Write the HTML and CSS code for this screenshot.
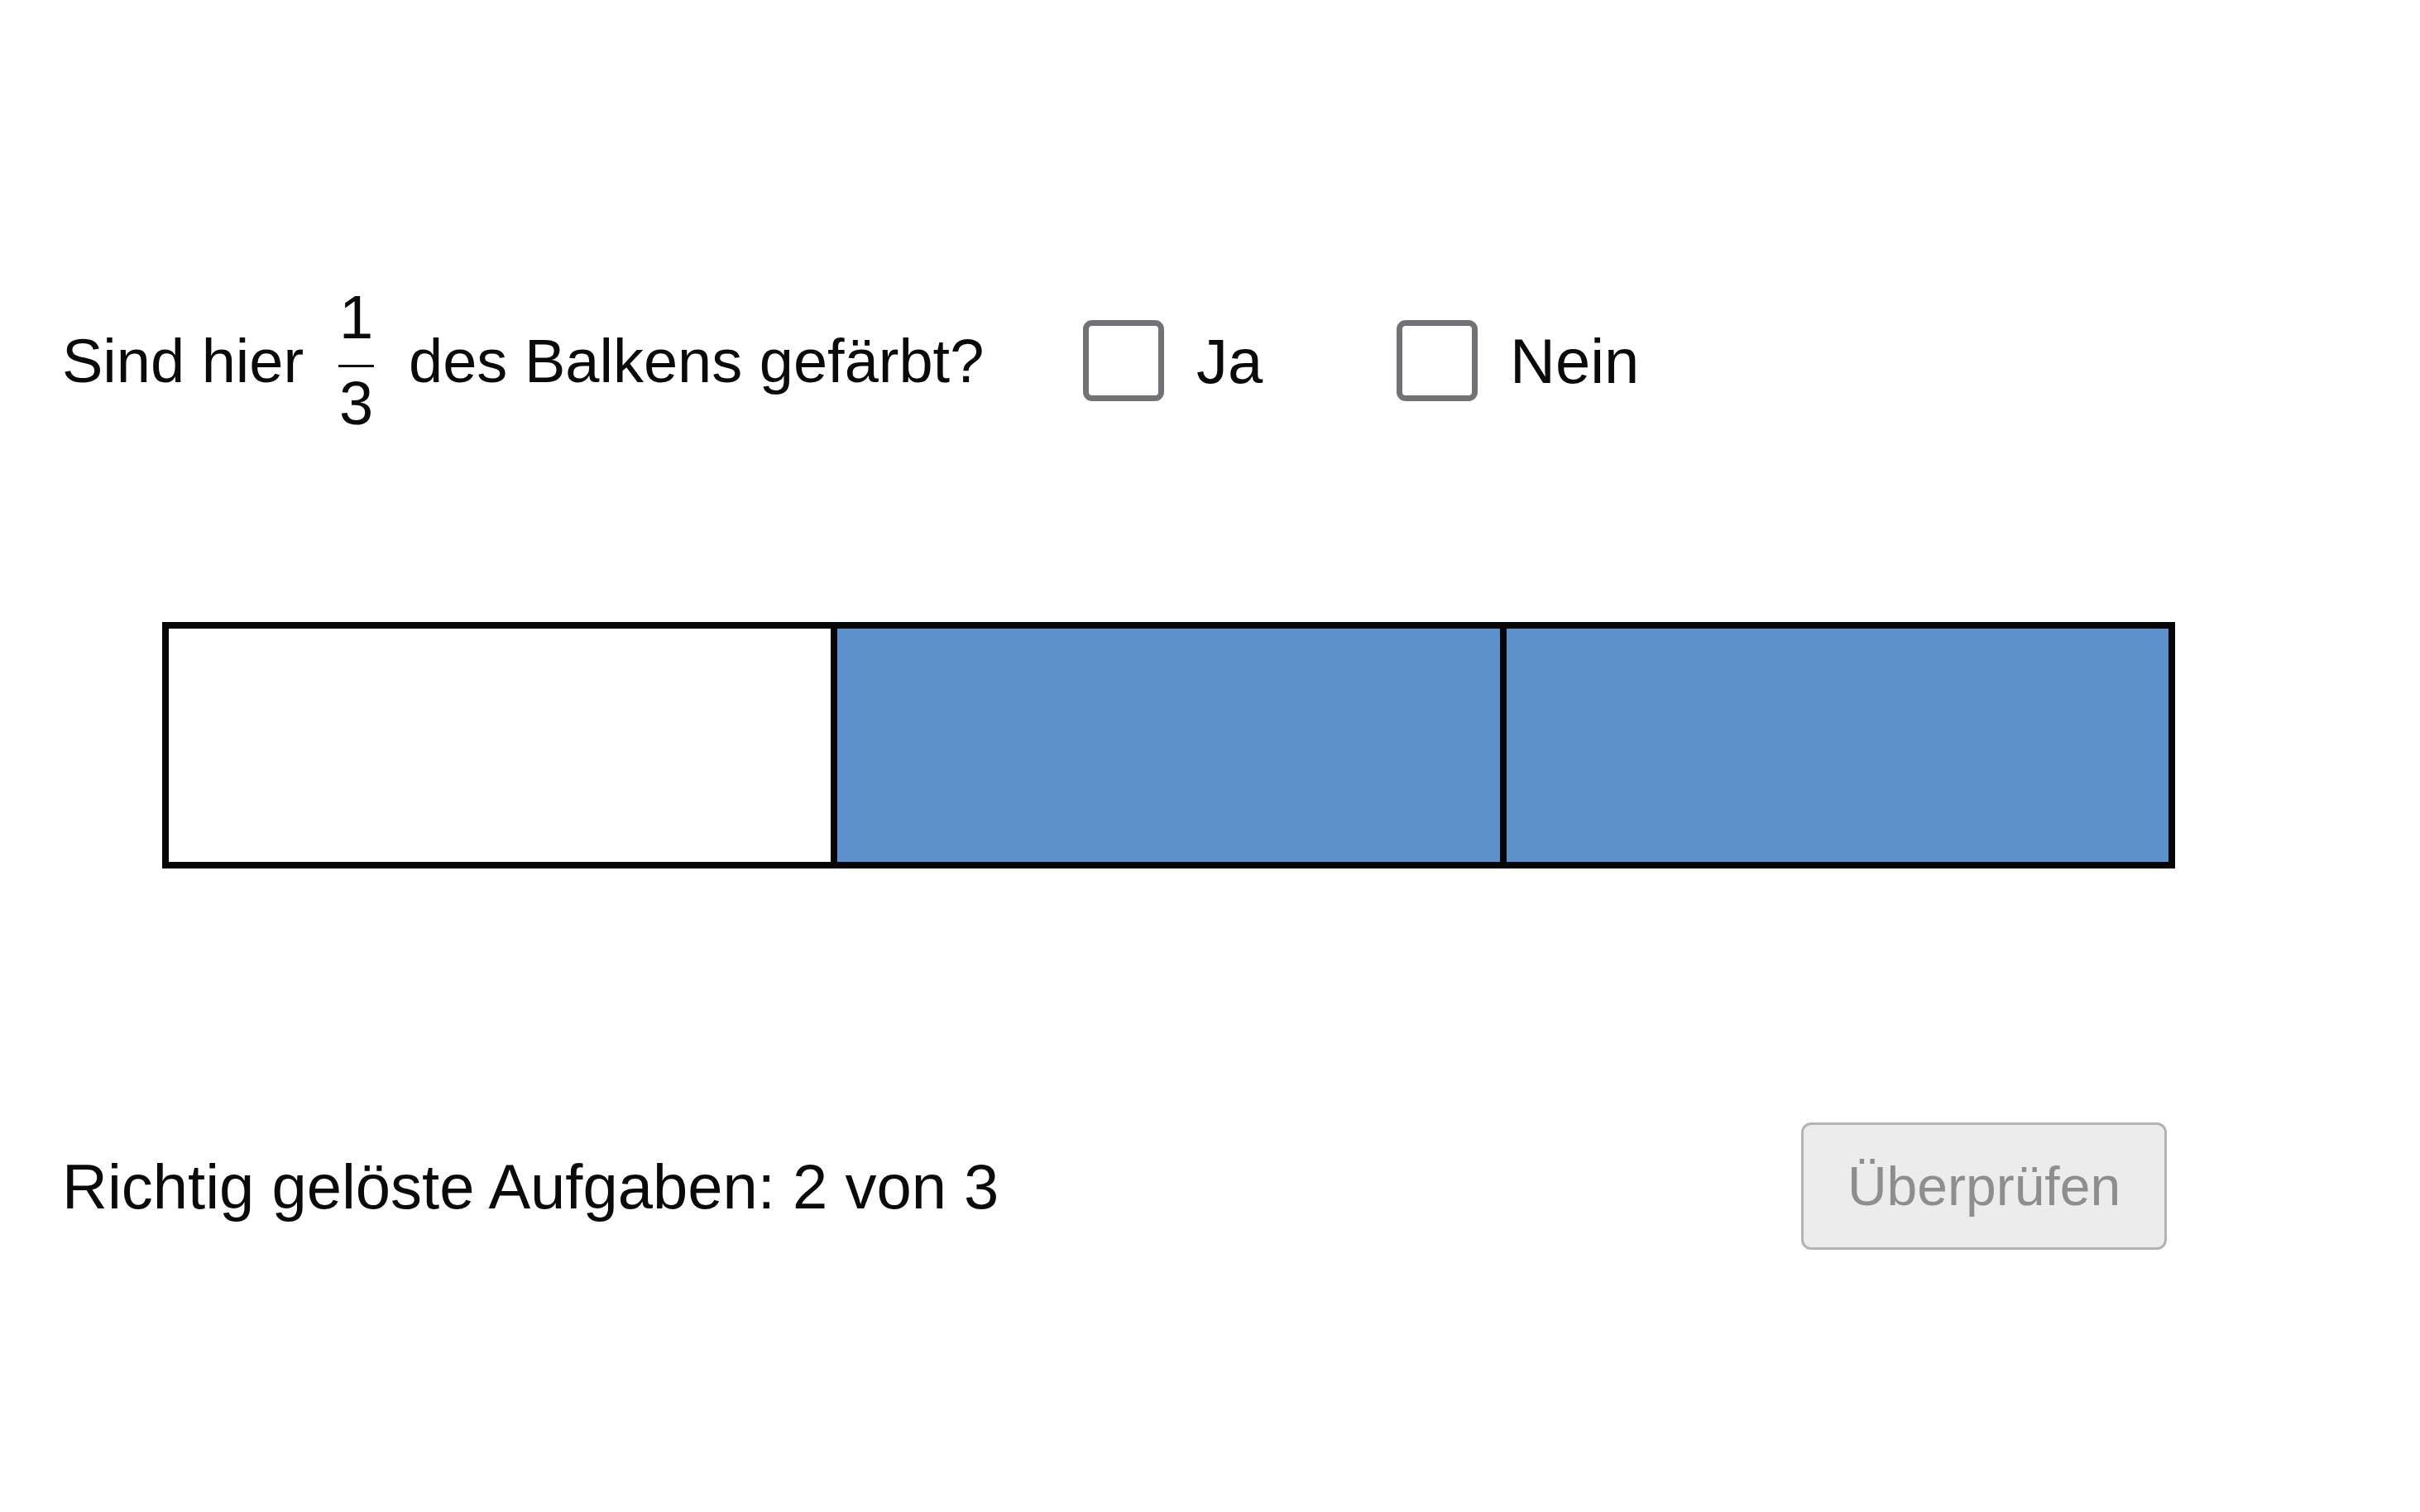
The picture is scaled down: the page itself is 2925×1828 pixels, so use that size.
FILE: index.html
```html
<!DOCTYPE html>
<html lang="de">
<head>
<meta charset="utf-8">
<title>Bruchteil</title>
<link rel="stylesheet" href="styles.css">
</head>
<body>
<main class="page">
  <section class="question-row">
    <div class="question">
      <span>Sind hier</span>
      <span class="frac">
        <span class="num">1</span>
        <span class="bar-line"></span>
        <span class="den">3</span>
      </span>
      <span>des Balkens gefärbt?</span>
    </div>
    <div class="options">
      <label class="option"><span class="box"></span><span class="opt-text">Ja</span></label>
      <label class="option"><span class="box"></span><span class="opt-text">Nein</span></label>
    </div>
  </section>

  <section class="strip">
    <div class="cell"></div>
    <div class="cell filled"></div>
    <div class="cell filled"></div>
  </section>

  <section class="footer-row">
    <div class="score">Richtig gelöste Aufgaben: 2 von 3</div>
    <button class="check" disabled>Überprüfen</button>
  </section>
</main>
</body>
</html>
```
FILE: styles.css
```css
html, body {
  margin: 0;
  padding: 0;
  background: #ffffff;
}

body {
  font-family: "Liberation Sans", Arial, sans-serif;
  color: #0a0a0a;
}

.page {
  padding: 386px 296px 0 75px;
}

.question-row {
  display: flex;
  align-items: center;
  height: 100px;
}

.question {
  display: flex;
  align-items: center;
  width: 1234px;
  font-size: 74px;
  white-space: nowrap;
}

.frac {
  display: flex;
  flex-direction: column;
  align-items: center;
  width: 43px;
  margin: 0 42px;
  font-size: 74px;
}

.num, .den {
  display: block;
  line-height: 60px;
  height: 60px;
}

.bar-line {
  display: block;
  width: 43px;
  height: 3px;
  background: #111;
  margin-top: 27px;
  margin-bottom: 14px;
}

.options {
  display: flex;
  align-items: center;
}

.option {
  display: flex;
  align-items: center;
  gap: 39px;
  width: 379px;
  font-size: 76px;
}

.box {
  box-sizing: border-box;
  width: 98px;
  height: 98px;
  border: 7px solid #707276;
  border-radius: 11px;
  background: #fff;
}

.strip {
  display: flex;
  margin: 266px 0 0 121px;
  height: 298px;
  box-sizing: border-box;
  border: 8px solid #050607;
}

.cell {
  flex: 1;
  background: #ffffff;
}

.cell + .cell {
  border-left: 8px solid #050607;
}

.cell.filled {
  background: #5d91cb;
}

.footer-row {
  display: flex;
  align-items: center;
  justify-content: space-between;
  margin-top: 307px;
}

.score {
  font-size: 76px;
  white-space: nowrap;
}

.check {
  box-sizing: border-box;
  width: 442px;
  height: 154px;
  margin-right: 10px;
  border: 3px solid #b3b3b3;
  border-radius: 12px;
  background: #ececec;
  color: #8e8e8e;
  font-family: "Liberation Sans", Arial, sans-serif;
  font-size: 66px;
  padding: 0;
}
```
